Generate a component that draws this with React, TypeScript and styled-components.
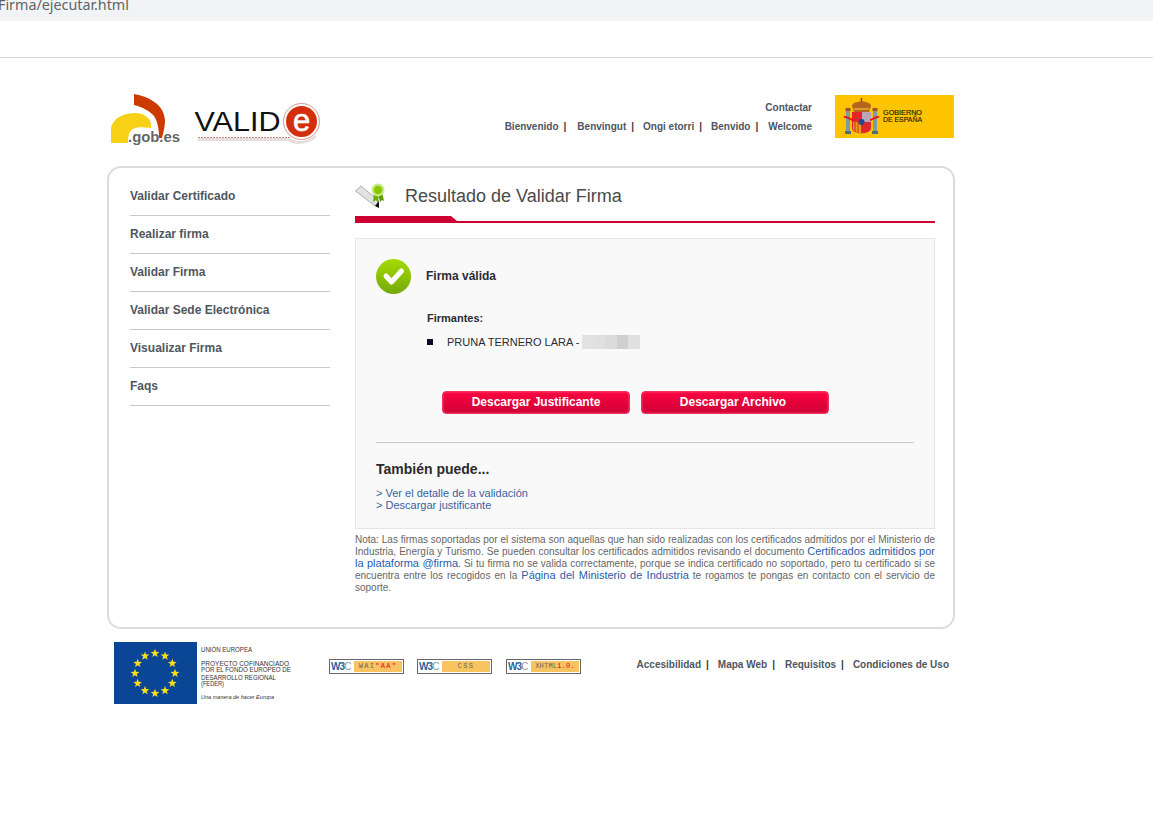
import React from "react";
import styled, { createGlobalStyle } from "styled-components";

const Global = createGlobalStyle`
  html, body { margin: 0; padding: 0; background: #fff; }
  body { font-family: "Liberation Sans", Arial, sans-serif; color: #333; }
`;

const AddressStrip = styled.div`
  height: 21px; background: #f1f3f4; overflow: hidden;
  font: 14.3px/10px "Noto Sans", sans-serif; color: #5f6368; white-space: nowrap;
  text-indent: -2px;
`;
const TabSpace = styled.div`height: 36px; border-bottom: 1px solid #d9d9d9;`;
const Page = styled.div`width: 848px; margin-left: 107px;`;
const Header = styled.header`height: 108px; display: flex; align-items: flex-start; justify-content: space-between;`;
const Logos = styled.div`margin-top: 34px; margin-left: 2px; display: flex; gap: 13px;`;
const HeaderRight = styled.div`display: flex; margin-top: 37px; margin-right: 1px; gap: 23px;`;
const TopNav = styled.nav`display: flex; flex-direction: column; align-items: flex-end; padding-top: 7px; gap: 7px;`;
const LinkLine = styled.div`display: flex; font-size: 10px; font-weight: bold; line-height: 12px; color: #4f5660;`;
const TopItem = styled.span<{ $gap?: number }>`
  &:not(:first-child)::before { content: "|"; color: #3a3a3a; margin: 0 ${(p) => p.$gap ?? 9}px 0 5px; }
`;
const Card = styled.section`
  box-sizing: border-box; height: 463px; border: 2px solid #dcdcdc; border-radius: 14px;
  padding: 10px 18px 0 21px; display: flex; gap: 25px;
`;
const Side = styled.nav`width: 200px; flex: none;`;
const SideItem = styled.div`
  box-sizing: border-box; height: 38px; border-bottom: 1px solid #c8c8c8;
  font-size: 12px; font-weight: bold; line-height: 36px; color: #4f5660;
`;
const Main = styled.main`width: 580px; flex: none;`;
const TitleRow = styled.div`height: 38px; display: flex; align-items: flex-start; gap: 20px;`;
const Title = styled.h1`margin: 0; font-size: 18px; font-weight: normal; line-height: 36px; color: #4a4a4a;`;
const Rule = styled.div`
  box-sizing: border-box; height: 7px; border-bottom: 2px solid #cc0033; position: relative;
  &::before {
    content: ""; position: absolute; left: 0; top: 0; width: 102px; height: 5px; background: #cc0033;
    clip-path: polygon(0 0, 96px 0, 100% 100%, 0 100%);
  }
`;
const Box = styled.div`
  box-sizing: border-box; height: 291px; margin-top: 15px; padding: 20px; border: 1px solid #e6e6e6; background: #f9f9f9;
`;
const Status = styled.div`display: flex; align-items: center; gap: 15px; height: 34px; font-size: 12px; font-weight: bold; color: #2b2b33;`;
const Signers = styled.div`margin: 19px 0 0 51px; font-size: 11px; color: #2b2b33;`;
const SignersTitle = styled.div`font-weight: bold; line-height: 13px;`;
const Signer = styled.div`display: flex; align-items: center; height: 14px; margin-top: 10px;`;
const Bullet = styled.span`width: 6px; height: 6px; background: #0a0a28; margin-right: 14px;`;
const Redacted = styled.span`
  width: 58px; height: 14px; margin-left: 3px;
  background: linear-gradient(90deg, #e2e2e2 0 12px, #e0e0e0 12px 23px, #dbdbdb 23px 35px, #cfcfcf 35px 46px, #e0e0e2 46px);
`;
const Buttons = styled.div`display: flex; gap: 11px; margin: 42px 0 0 66px;`;
const Button = styled.div<{ $inset?: number }>`
  box-sizing: border-box; width: 188px; height: 23px; border: 1px solid #f0305c; border-radius: 4px;
  padding-right: ${(p) => p.$inset ?? 0}px;
  background: linear-gradient(#fb0440, #cf0036); box-shadow: inset 0 0 2px #ff5a80;
  color: #fff; font-size: 12px; font-weight: bold; line-height: 21px; text-align: center;
`;
const Divider = styled.hr`margin: 28px 0 0; border: 0; border-top: 1px solid #c8c8c8;`;
const Also = styled.h2`margin: 18px 0 10px; font-size: 14px; font-weight: bold; line-height: 16px; color: #2b2b2b;`;
const BoxLink = styled.div`font-size: 11px; line-height: 12px; color: #3a62a0;`;
const Note = styled.p`
  margin: 5px 0 0; font-size: 10px; line-height: 12px; color: #666; text-align: justify;
`;
const NoteLink = styled.span`color: #2a5ca8; font-size: 11px; line-height: 10px;`;
const Footer = styled.footer`display: flex; align-items: flex-start; padding: 13px 0 0 7px;`;
const Badges = styled.div`display: flex; margin: 17px 0 0 37px; gap: 13px;`;
const Badge = styled.div<{ $extra?: number }>`
  box-sizing: border-box; width: 75px; height: 15px; border: 1px solid #666; background: #fff;
  padding: 1px; display: flex; gap: 3px; margin-left: ${(p) => p.$extra ?? 0}px;
`;
const W3 = styled.span`
  width: 20px; font: bold 10px/11px "Liberation Sans", sans-serif; letter-spacing: -0.9px; color: #2d5f9e; overflow: hidden;
  & > i { font-style: normal; font-weight: normal; color: #999; }
`;
const BadgeLabel = styled.span<{ $spacing: number }>`
  flex: 1; background: #f9c460; font: 7px/11px "Liberation Mono", monospace; letter-spacing: ${(p) => p.$spacing}px; color: #666;
  text-align: center; white-space: nowrap; overflow: hidden;
  & > b { font-weight: normal; color: #e8002a; }
`;
const FooterLinks = styled.div`margin: 17px 0 0 auto; padding-right: 6px;`;

const Gob = () => (
  <svg width="72" height="53" viewBox="0 0 72 53">
    <path d="M2 51V36C4 26 15 21 26 21C34 21 40 25 42 31L42 36C34 35 27 35 24 37C21 39 19 41 19 51Z" fill="#f8d117" />
    <path d="M25 2C37 4 55 11 56 28C56 35 54 42 53 46L50 46C50 38 49 30 45 24C41 19 33 15 25 13Z" fill="#cc3a00" />
    <text x="19" y="50" fontFamily="Liberation Sans" fontWeight="bold" fontSize="14" fill="#666" textLength="52" lengthAdjust="spacingAndGlyphs">.gob.es</text>
  </svg>
);
const Valide = () => (
  <svg width="128" height="52" viewBox="0 0 128 52" style={{ marginTop: 1 }}>
    <path d="M4 45H95C102 49 112 50 121 42L123 44C112 53 100 52 94 48H4Z" fill="#e6dedc" />
    <path d="M4 44.500H96" stroke="#c9867a" strokeWidth="1" strokeDasharray="2 1" />
    <text x="0.500" y="38" fontFamily="Liberation Sans" fontSize="27" fill="#111" textLength="86" lengthAdjust="spacingAndGlyphs">VALID</text>
    <circle cx="107.500" cy="28.500" r="18" fill="#fff" stroke="#d49a8c" />
    <circle cx="107.500" cy="28.500" r="15.500" fill="#d32f0c" />
    <text x="107.500" y="38" textAnchor="middle" fontFamily="Liberation Sans" fontSize="31" fill="#fff" stroke="#fff" strokeWidth="0.600">e</text>
  </svg>
);
const Spain = () => (
  <svg width="119" height="43" viewBox="0 0 119 43">
    <rect width="119" height="43" fill="#ffc400" />
    <rect x="11" y="16" width="4" height="20" fill="#7f9aa3" />
    <rect x="38" y="16" width="4" height="20" fill="#7f9aa3" />
    <rect x="10" y="36" width="6" height="3" fill="#4d6b78" />
    <rect x="37" y="36" width="6" height="3" fill="#4d6b78" />
    <rect x="10.500" y="13" width="5" height="3" fill="#a0522d" />
    <rect x="37.500" y="13" width="5" height="3" fill="#a0522d" />
    <path d="M17 11C17 5 36 5 36 11L34 17H19Z" fill="#b5651d" />
    <path d="M19 14H34" stroke="#e4b13a" strokeWidth="1.500" />
    <path d="M26.500 3V7" stroke="#a33" strokeWidth="1.500" />
    <path d="M17 17H36V33C36 40 17 40 17 33Z" fill="#e1262c" />
    <path d="M27 17H36V27H27Z" fill="#b9a7b8" />
    <path d="M18 27H26V38C21 38 18 36 18 33Z" fill="#e3a21a" />
    <path d="M20 27V37M23 27V38" stroke="#d8232a" strokeWidth="1" />
    <circle cx="26.500" cy="27" r="3" fill="#24458c" />
    <path d="M9 22C13 21 15 25 18 25M44 22C40 21 38 25 35 25" fill="none" stroke="#e11" strokeWidth="2" />
    <text x="48" y="19.500" fontFamily="Liberation Sans" fontSize="7" fill="#221a00" stroke="#221a00" strokeWidth="0.150" textLength="39" lengthAdjust="spacingAndGlyphs">GOBIERNO</text>
    <text x="48" y="27" fontFamily="Liberation Sans" fontSize="7" fill="#221a00" stroke="#221a00" strokeWidth="0.150" textLength="39" lengthAdjust="spacingAndGlyphs">DE ESPAÑA</text>
  </svg>
);
const Ribbon = () => (
  <svg width="30" height="26" viewBox="0 0 30 26" style={{ marginTop: 5 }}>
    <path d="M0.500 8L6 3L24 18L20 23Z" fill="#e2e2e2" stroke="#9a9a9a" strokeWidth="0.800" />
    <path d="M20 23L24 18L24 25Z" fill="#111" />
    <path d="M19 10L18 19L21 17L23 20L24 11Z" fill="#6cae00" />
    <path d="M23 10L25 19L27 17L29 18L27 9Z" fill="#5c9a00" />
    <circle cx="23" cy="7" r="6.500" fill="#c9e88a" />
    <circle cx="23" cy="7" r="4.200" fill="#88c800" />
  </svg>
);
const Check = () => (
  <svg width="35" height="35" viewBox="0 0 35 35">
    <defs>
      <linearGradient id="ck" x1="0" y1="0" x2="0" y2="1">
        <stop offset="0" stopColor="#a4dc00" />
        <stop offset="1" stopColor="#76a80a" />
      </linearGradient>
    </defs>
    <circle cx="17.500" cy="17.500" r="17.500" fill="url(#ck)" />
    <path d="M10 17L15.500 23L25.500 12" fill="none" stroke="#fff" strokeWidth="5" strokeLinecap="round" strokeLinejoin="round" />
  </svg>
);
const star = (cx: number, cy: number) => {
  const pts: string[] = [];
  for (let i = 0; i < 10; i++) {
    const r = i % 2 ? 1.9 : 4.6;
    const a = -Math.PI / 2 + (i * Math.PI) / 5;
    pts.push(`${(cx + r * Math.cos(a)).toFixed(1)},${(cy + r * Math.sin(a)).toFixed(1)}`);
  }
  return pts.join(" ");
};
const EU = () => (
  <svg width="178" height="62" viewBox="0 0 178 62">
    <rect width="83" height="62" fill="#0b4596" />
    {Array.from({ length: 12 }).map((_, i) => {
      const a = (i * Math.PI) / 6;
      return <polygon key={i} points={star(41 + 20 * Math.sin(a), 31.3 - 20 * Math.cos(a))} fill="#f7e018" />;
    })}
    <g fontFamily="Liberation Sans" fontSize="6.500" fill="#333">
      <text x="87" y="9.500" textLength="51" lengthAdjust="spacingAndGlyphs">UNIÓN EUROPEA</text>
      <text x="87" y="23.500" textLength="88" lengthAdjust="spacingAndGlyphs">PROYECTO COFINANCIADO</text>
      <text x="87" y="30" textLength="90" lengthAdjust="spacingAndGlyphs">POR EL FONDO EUROPEO DE</text>
      <text x="87" y="37.500" textLength="75" lengthAdjust="spacingAndGlyphs">DESARROLLO REGIONAL</text>
      <text x="87" y="44" textLength="23" lengthAdjust="spacingAndGlyphs">(FEDER)</text>
      <text x="87" y="57" textLength="73" lengthAdjust="spacingAndGlyphs" fontStyle="italic" fontSize="6">Una manera de hacer Europa</text>
    </g>
  </svg>
);

export default function App() {
  return (
    <>
      <Global />
      <AddressStrip>Firma/ejecutar.html</AddressStrip>
      <TabSpace />
      <Page>
        <Header>
          <Logos><Gob /><Valide /></Logos>
          <HeaderRight>
            <TopNav>
              <LinkLine>Contactar</LinkLine>
              <LinkLine>
                <TopItem>Bienvenido</TopItem>
                <TopItem $gap={11}>Benvingut</TopItem>
                <TopItem>Ongi etorri</TopItem>
                <TopItem>Benvido</TopItem>
                <TopItem $gap={10}>Welcome</TopItem>
              </LinkLine>
            </TopNav>
            <Spain />
          </HeaderRight>
        </Header>
        <Card>
          <Side>
            {["Validar Certificado", "Realizar firma", "Validar Firma", "Validar Sede Electrónica", "Visualizar Firma", "Faqs"].map((t) => (
              <SideItem key={t}>{t}</SideItem>
            ))}
          </Side>
          <Main>
            <TitleRow><Ribbon /><Title>Resultado de Validar Firma</Title></TitleRow>
            <Rule />
            <Box>
              <Status><Check />Firma válida</Status>
              <Signers>
                <SignersTitle>Firmantes:</SignersTitle>
                <Signer><Bullet />PRUNA TERNERO LARA - <Redacted /></Signer>
              </Signers>
              <Buttons>
                <Button>Descargar Justificante</Button>
                <Button $inset={4}>Descargar Archivo</Button>
              </Buttons>
              <Divider />
              <Also>También puede...</Also>
              <BoxLink>&gt; Ver el detalle de la validación</BoxLink>
              <BoxLink>&gt; Descargar justificante</BoxLink>
            </Box>
            <Note>
              Nota: Las firmas soportadas por el sistema son aquellas que han sido realizadas con los certificados admitidos por el Ministerio de Industria, Energía y Turismo. Se pueden consultar los certificados admitidos revisando el documento <NoteLink>Certificados admitidos por la plataforma @firma</NoteLink>. Si tu firma no se valida correctamente, porque se indica certificado no soportado, pero tu certificado si se encuentra entre los recogidos en la <NoteLink>Página del Ministerio de Industria</NoteLink> te rogamos te pongas en contacto con el servicio de soporte.
            </Note>
          </Main>
        </Card>
        <Footer>
          <EU />
          <Badges>
            <Badge><W3>W3<i>C</i></W3><BadgeLabel $spacing={1.3}>WAI<b>"AA"</b></BadgeLabel></Badge>
            <Badge><W3>W3<i>C</i></W3><BadgeLabel $spacing={1.4}>CSS</BadgeLabel></Badge>
            <Badge $extra={1}><W3>W3<i>C</i></W3><BadgeLabel $spacing={0.2}>XHTML<b>1.0.</b></BadgeLabel></Badge>
          </Badges>
          <FooterLinks>
            <LinkLine>
              <TopItem>Accesibilidad</TopItem>
              <TopItem>Mapa Web</TopItem>
              <TopItem $gap={10}>Requisitos</TopItem>
              <TopItem>Condiciones de Uso</TopItem>
            </LinkLine>
          </FooterLinks>
        </Footer>
      </Page>
    </>
  );
}
